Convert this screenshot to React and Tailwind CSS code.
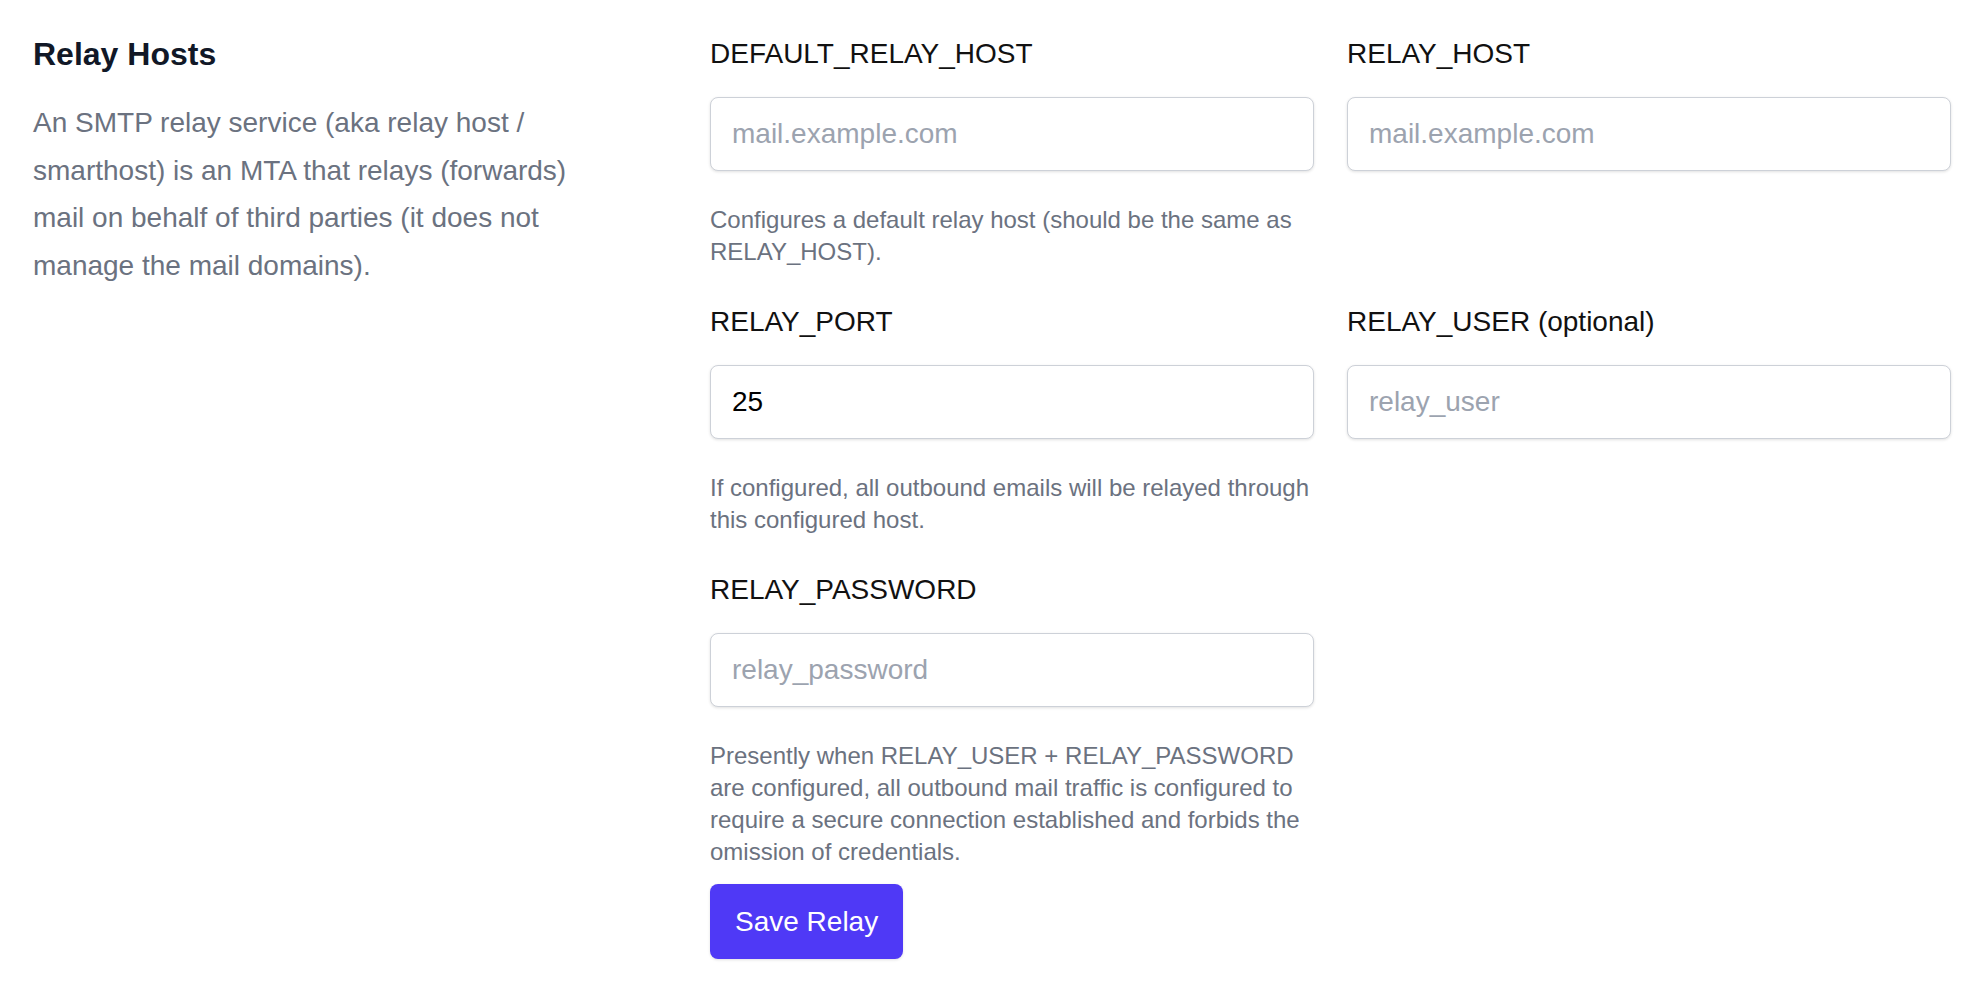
import React from "react";

function Field({ label, placeholder, value, help }) {
  return (
    <div className="flex flex-col">
      <label className="text-[28px] leading-[40px] text-[#111111]">{label}</label>
      <input
        type="text"
        placeholder={placeholder}
        defaultValue={value}
        className="mt-[23px] h-[74px] w-full rounded-[8px] border border-[#cdd1d8] bg-white px-[21px] text-[28px] text-black shadow-[0_1px_3px_0_rgba(0,0,0,0.12)] outline-none placeholder:text-[#9ca3af]"
      />
      {help ? (
        <p className="mt-[33px] text-[24px] leading-[32px] text-[#6b7280]">{help}</p>
      ) : null}
    </div>
  );
}

export default function App() {
  return (
    <div className="min-h-[992px] w-full bg-white font-['Liberation_Sans',Arial,sans-serif]">
      <div className="flex px-[33px] pt-[34px]">
        <div className="w-[564px] shrink-0">
          <h2 className="text-[32px] font-bold leading-[40px] text-[#111827]">Relay Hosts</h2>
          <p className="mt-[25px] text-[28px] leading-[47.5px] text-[#6b7280]">
            An SMTP relay service (aka relay host / smarthost) is an MTA that relays (forwards) mail on behalf of third parties (it does not manage the mail domains).
          </p>
        </div>
        <div className="ml-[113px] flex-1">
          <div className="grid grid-cols-2 gap-x-[33px] gap-y-[34px]">
            <Field
              label="DEFAULT_RELAY_HOST"
              placeholder="mail.example.com"
              help="Configures a default relay host (should be the same as RELAY_HOST)."
            />
            <Field label="RELAY_HOST" placeholder="mail.example.com" />
            <Field
              label="RELAY_PORT"
              value="25"
              help="If configured, all outbound emails will be relayed through this configured host."
            />
            <Field label="RELAY_USER (optional)" placeholder="relay_user" />
            <Field
              label="RELAY_PASSWORD"
              placeholder="relay_password"
              help="Presently when RELAY_USER + RELAY_PASSWORD are configured, all outbound mail traffic is configured to require a secure connection established and forbids the omission of credentials."
            />
          </div>
          <button
            type="button"
            className="mt-[16px] h-[75px] rounded-[8px] bg-[#4f39f6] px-[25px] text-[28px] text-white shadow-[0_1px_3px_0_rgba(0,0,0,0.12)]"
          >
            Save Relay
          </button>
        </div>
      </div>
    </div>
  );
}
